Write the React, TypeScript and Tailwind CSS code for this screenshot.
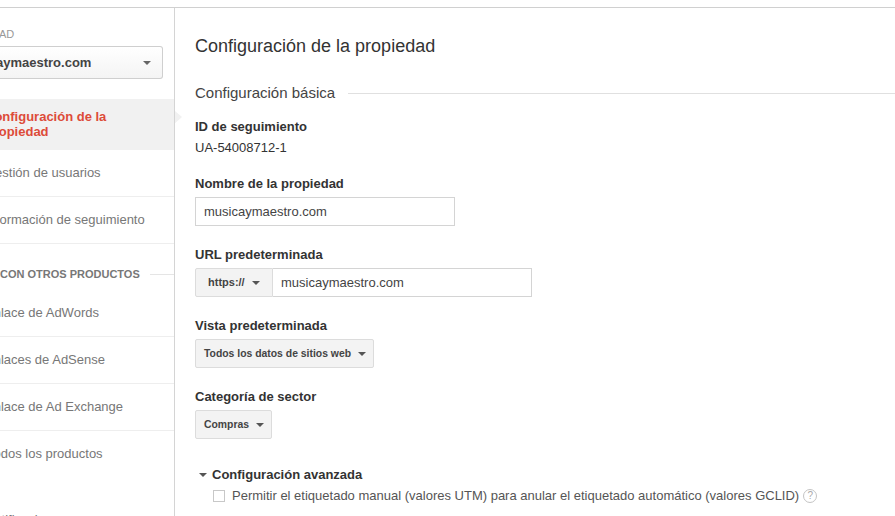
import React from 'react'

const font = { fontFamily: '"Liberation Sans", Arial, sans-serif' }

function Caret({ className = 'border-t-[#555]' }: { className?: string }) {
  return <span className={`inline-block w-0 h-0 border-x-[4px] border-x-transparent border-t-[4px] ${className}`} />
}

function NavItem({ label, last = false }: { label: string; last?: boolean }) {
  return (
    <div className={`h-[47px] flex items-center text-[13px] text-[#777] whitespace-nowrap ${last ? 'pb-[2px] pl-[2px]' : 'border-b border-[#eeeeee]'}`}>
      <span className="-ml-[15px]">{label}</span>
    </div>
  )
}

function Label({ children }: { children: React.ReactNode }) {
  return <div className="text-[13px] leading-[15px] font-bold text-[#333]">{children}</div>
}

function SmallSelect({ label }: { label: string }) {
  return (
    <div className="inline-flex h-[29px] items-center gap-[7px] rounded-[2px] border border-[#dcdcdc] bg-[#f3f3f3] pl-[8px] pr-[7px] text-[10.4px] font-bold text-[#444]">
      {label}
      <Caret />
    </div>
  )
}

export default function App() {
  return (
    <div style={font} className="h-[516px] w-[895px] overflow-hidden bg-white">
      <div className="h-[8px] border-b border-[#d0d0d0]" />
      <div className="flex h-[508px]">
        {/* Sidebar */}
        <aside className="w-[175px] shrink-0 overflow-hidden border-r border-[#d4d4d4]">
          <div className="h-[91px] pt-[20px]">
            <div className="-ml-[1px] text-[11px] leading-[13px] text-[#999] text-right w-[15px]">AD</div>
            <div className="mt-[5px] flex h-[33px] w-[163px] items-center justify-between rounded-r-[3px] border border-l-0 border-[#cfcfcf] bg-gradient-to-b from-white to-[#f4f4f4] pr-[11px] text-[13px] font-bold text-[#444]">
              <span className="-ml-[4px]">aymaestro.com</span>
              <Caret className="border-t-[#666]" />
            </div>
          </div>
          <div className="flex h-[51px] items-center bg-[#f1f1f1] pb-[2px] text-[13px] font-bold leading-[15px] text-[#dd4b39] whitespace-nowrap">
            <div className="-ml-[15px]">
              Configuración de la
              <br />
              Propiedad
            </div>
          </div>
          <NavItem label="Gestión de usuarios" />
          <NavItem label="Información de seguimiento" />
          <div className="flex h-[46px] items-center gap-[10px] pt-[15px] text-[11px] font-bold text-[#777] whitespace-nowrap">
            <span>CON OTROS PRODUCTOS</span>
            <div className="h-px flex-1 bg-[#e5e5e5]" />
          </div>
          <NavItem label="Enlace de AdWords" />
          <NavItem label="Enlaces de AdSense" />
          <NavItem label="Enlace de Ad Exchange" />
          <NavItem label="Todos los productos" last />
          <div className="mt-[32px] -ml-[15px] text-[13px] text-[#777]">Notificaciones</div>
        </aside>

        {/* Main */}
        <main className="relative flex-1 pl-[20px] overflow-hidden">
          <div className="absolute left-[-1px] top-[102px] h-[14px] w-[8px] bg-[#f1f1f1] [clip-path:polygon(0_0,100%_50%,0_100%)]" />
          <h1 className="pt-[26px] text-[18px] leading-[24px] text-[#333]">Configuración de la propiedad</h1>
          <div className="mt-[26px] flex items-center gap-[13px]">
            <span className="text-[15px] leading-[18px] text-[#444]">Configuración básica</span>
            <div className="h-px flex-1 bg-[#e0e0e0]" />
          </div>
          <div className="mt-[17px]"><Label>ID de seguimiento</Label></div>
          <div className="mt-[6px] text-[13px] leading-[15px] text-[#333]">UA-54008712-1</div>

          <div className="mt-[21px]"><Label>Nombre de la propiedad</Label></div>
          <div className="mt-[6px] flex h-[29px] w-[260px] items-center border border-[#d4d4d4] pl-[8px] text-[13px] text-[#444]">musicaymaestro.com</div>

          <div className="mt-[21px]"><Label>URL predeterminada</Label></div>
          <div className="mt-[6px] flex h-[29px] w-[337px]">
            <div className="flex w-[78px] items-center gap-[7px] rounded-l-[2px] border border-[#dcdcdc] bg-[#f3f3f3] pl-[12px] text-[11px] font-bold text-[#444]">
              https://
              <Caret />
            </div>
            <div className="flex flex-1 items-center border border-l-0 border-[#d4d4d4] pl-[8px] text-[13px] text-[#444]">musicaymaestro.com</div>
          </div>

          <div className="mt-[21px]"><Label>Vista predeterminada</Label></div>
          <div className="mt-[6px]"><SmallSelect label="Todos los datos de sitios web" /></div>

          <div className="mt-[21px]"><Label>Categoría de sector</Label></div>
          <div className="mt-[6px]"><SmallSelect label="Compras" /></div>

          <div className="mt-[28px] flex items-center gap-[5px] pl-[4px] text-[13px] font-bold leading-[15px] text-[#333]">
            <Caret />
            Configuración avanzada
          </div>
          <div className="mt-[6px] flex items-center pl-[18px] text-[13px] leading-[15px] text-[#555]">
            <span className="mr-[7px] h-[12px] w-[12px] border border-[#c8c8c8] bg-white" />
            <span>Permitir el etiquetado manual (valores UTM) para anular el etiquetado automático (valores GCLID)</span>
            <span className="ml-[4px] flex h-[14px] w-[14px] items-center justify-center rounded-full border border-[#c4c4c4] text-[10px] text-[#aaa]">?</span>
          </div>
        </main>
      </div>
    </div>
  )
}
